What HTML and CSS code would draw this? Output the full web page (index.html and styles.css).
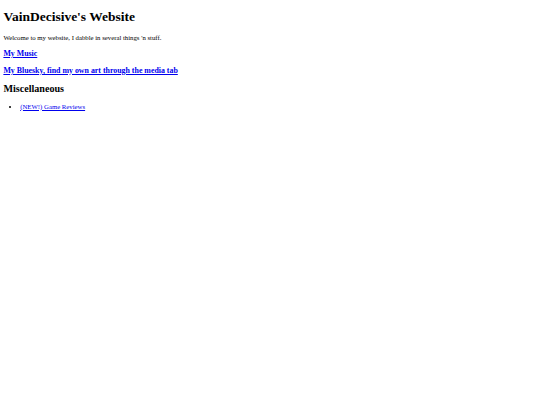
FILE: index.html
```html
<!DOCTYPE html>
<html>
<head>
<meta charset="utf-8">
<title>VainDecisive's Website</title>
<link rel="stylesheet" href="styles.css">
</head>
<body class="page">
<h1 class="title">VainDecisive's Website</h1>
<p class="intro">Welcome to my website, I dabble in several things 'n stuff.</p>
<h3 class="sub"><a class="link" href="#">My Music</a></h3>
<h3 class="sub"><a class="link" href="#">My Bluesky, find my own art through the media tab</a></h3>
<h2 class="section">Miscellaneous</h2>
<ul class="list">
<li class="item"><a class="link" href="#">(NEW!) Game Reviews</a></li>
</ul>
</body>
</html>
```

FILE: styles.css
```css
html {
  background: #ffffff;
}
.page {
  margin: 0 3.375px 3.375px;
  font-family: "Liberation Serif", "Times New Roman", serif;
  font-size: 6.75px;
  color: #000000;
}
.title {
  font-size: 13.5px;
  font-weight: bold;
  margin: 0.67em 0;
}
.intro {
  margin: 1em 0;
}
.sub {
  font-size: 7.898px;
  font-weight: bold;
  margin: 1em 0;
}
.section {
  font-size: 10.125px;
  font-weight: bold;
  margin: 0.83em 0;
}
.list {
  margin: 1em 0;
  padding-left: 16.875px;
}
.link {
  color: #0000ee;
  text-decoration: underline;
}
```
